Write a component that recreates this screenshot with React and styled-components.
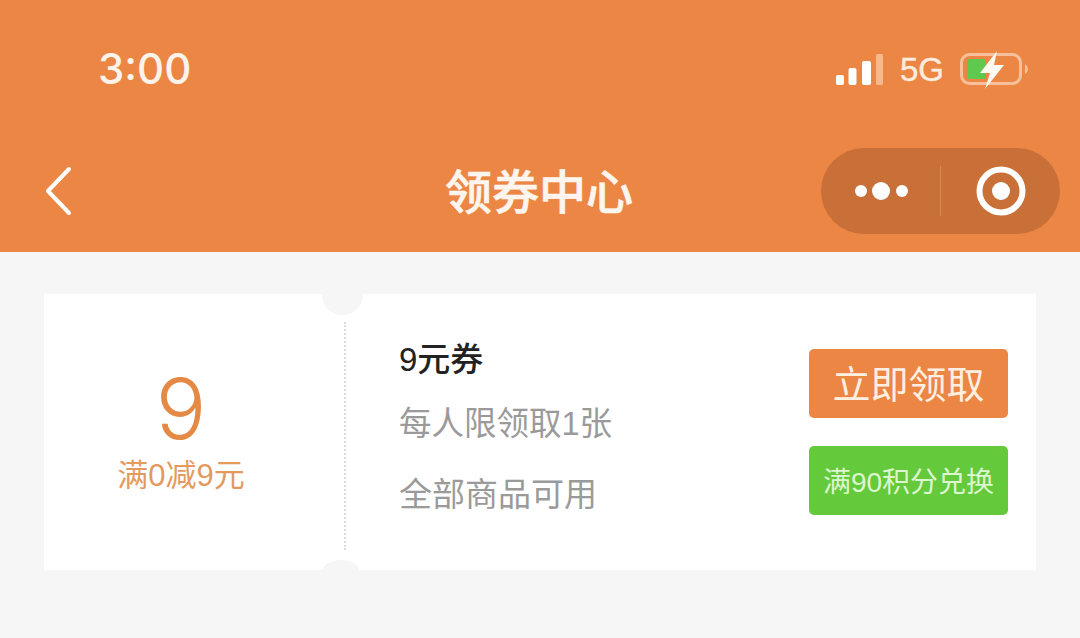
import React from 'react'
import styled, { createGlobalStyle } from 'styled-components'

const GlobalStyle = createGlobalStyle`
  html, body {
    margin: 0;
    padding: 0;
    background: #f6f6f6;
    font-family: "Liberation Sans", "Noto Sans CJK SC", sans-serif;
  }
`

const Page = styled.div`
  width: 1080px;
  height: 638px;
  overflow: hidden;
  background: #f6f6f6;
`

const Header = styled.header`
  height: 252px;
  background: #ec8644;
  color: #fff;
`

const StatusBar = styled.div`
  height: 130px;
  box-sizing: border-box;
  padding: 45px 50px 0 98px;
  display: flex;
  justify-content: space-between;
  align-items: flex-start;
`

const Time = styled.div`
  font-family: Inter, sans-serif;
  font-size: 42px;
  font-weight: 500;
  line-height: 48px;
  color: #fdf3ea;
`

const StatusIcons = styled.div`
  display: flex;
  align-items: center;
  gap: 16px;
  margin-top: 4px;
`

const NetworkLabel = styled.span`
  font-size: 33px;
  line-height: 36px;
  color: #fcecdf;
  -webkit-text-stroke: 0.4px #fcecdf;
`

const NavBar = styled.nav`
  height: 122px;
  display: grid;
  grid-template-columns: 1fr auto 1fr;
  align-items: center;
`

const BackButton = styled.div`
  padding-left: 44px;
  display: flex;
  align-items: center;
`

const Title = styled.h1`
  margin: 3px 0 0 -2px;
  font-size: 47px;
  font-weight: 500;
  line-height: 60px;
  color: #fdf5ee;
  -webkit-text-stroke: 0.7px #fdf5ee;
`

const Capsule = styled.div`
  justify-self: end;
  margin-right: 20px;
  width: 239px;
  height: 86px;
  border-radius: 43px;
  background: #c87038;
  display: grid;
  grid-template-columns: 1fr 1px 1fr;
  align-items: center;
  justify-items: center;
`

const CapsuleDivider = styled.div`
  width: 1px;
  height: 50px;
  background: #da8a50;
`

const Ticket = styled.section`
  position: relative;
  margin: 42px 44px 0;
  height: 276px;
  background: #fff;
  display: flex;
  align-items: flex-start;
`

const TopNotch = styled.div`
  position: absolute;
  left: 278px;
  top: 0;
  width: 41px;
  height: 21px;
  border-radius: 0 0 20px 20px;
  background: #f6f6f6;
`

const BottomNotch = styled.div`
  position: absolute;
  left: 279px;
  bottom: 0;
  width: 36px;
  height: 10px;
  border-radius: 18px 18px 0 0 / 10px 10px 0 0;
  background: #f6f6f6;
`

const Amount = styled.div`
  width: 274px;
  display: flex;
  flex-direction: column;
  align-items: center;
  padding-top: 72px;
  margin-right: 26px;
  color: #e48a45;
`

const AmountValue = styled.div`
  font-family: Inter, sans-serif;
  font-size: 84px;
  font-weight: 350;
  line-height: 86px;
`

const AmountRule = styled.div`
  font-size: 31px;
  line-height: 36px;
  color: #e39a5f;
  margin-top: 6px;
  white-space: nowrap;
`

const Perforation = styled.div`
  width: 0;
  height: 228px;
  margin-top: 28px;
  border-left: 2px dotted #dcdcdc;
`

const Info = styled.div`
  flex: 1;
  padding: 51px 0 0 53px;
  display: flex;
  flex-direction: column;
`

const InfoTitle = styled.div`
  font-size: 33px;
  font-weight: 500;
  line-height: 30px;
  color: #222;
`

const InfoLine = styled.div`
  font-size: ${props => props.$size}px;
  line-height: 44px;
  color: #9a9a9a;
  margin-top: 27px;
`

const Actions = styled.div`
  width: 199px;
  margin: 55px 28px 0 0;
  display: flex;
  flex-direction: column;
  gap: 28px;
`

const ActionButton = styled.div`
  box-sizing: border-box;
  height: 69px;
  padding-bottom: ${props => props.$lift}px;
  border-radius: 5px;
  background: ${props => props.$color};
  color: ${props => props.$text};
  font-size: ${props => props.$size}px;
  display: flex;
  align-items: center;
  justify-content: center;
  white-space: nowrap;
`

const SignalIcon = () => (
  <svg width="48" height="32" viewBox="0 0 48 32">
    <rect x="0" y="21" width="8" height="10" rx="2" fill="#fff" />
    <rect x="12.5" y="14" width="8" height="17" rx="2" fill="#fff" />
    <rect x="26" y="7" width="9" height="24" rx="2" fill="#fff" />
    <rect x="40" y="0" width="7" height="31" rx="1.5" fill="#f6b98d" />
  </svg>
)

const BatteryIcon = () => (
  <svg width="70" height="42" viewBox="0 0 70 42">
    <rect x="1.5" y="5.5" width="59" height="29" rx="8" fill="none" stroke="#f8c09a" strokeWidth="3" />
    <rect x="7" y="10" width="19" height="20" rx="3" fill="#5fc94f" />
    <path d="M65 15 Q68 17 68 20 Q68 23 65 25 Z" fill="#f8c09a" />
    <path d="M37 2 L20 24 L30 24 L25 40 L44 16 L34 16 Z" fill="#fffaf2" />
  </svg>
)

const BackIcon = () => (
  <svg width="30" height="50" viewBox="0 0 30 50">
    <path d="M25 3 L4 25 L25 47" fill="none" stroke="#fff" strokeWidth="4" strokeLinecap="round" strokeLinejoin="round" />
  </svg>
)

const MoreIcon = () => (
  <svg width="58" height="20" viewBox="0 0 58 20">
    <circle cx="9" cy="10" r="6" fill="#fff" />
    <circle cx="29" cy="10" r="9" fill="#fff" />
    <circle cx="50" cy="10" r="6" fill="#fff" />
  </svg>
)

const TargetIcon = () => (
  <svg width="50" height="50" viewBox="0 0 50 50">
    <circle cx="25" cy="25" r="21.5" fill="none" stroke="#fff" strokeWidth="6" />
    <circle cx="25" cy="25" r="9" fill="#fff" />
  </svg>
)

const App = () => {
  return (
    <Page>
      <GlobalStyle />
      <Header>
        <StatusBar>
          <Time>3:00</Time>
          <StatusIcons>
            <SignalIcon />
            <NetworkLabel>5G</NetworkLabel>
            <BatteryIcon />
          </StatusIcons>
        </StatusBar>
        <NavBar>
          <BackButton><BackIcon /></BackButton>
          <Title>领券中心</Title>
          <Capsule>
            <MoreIcon />
            <CapsuleDivider />
            <TargetIcon />
          </Capsule>
        </NavBar>
      </Header>
      <Ticket>
        <TopNotch />
        <BottomNotch />
        <Amount>
          <AmountValue>9</AmountValue>
          <AmountRule>满0减9元</AmountRule>
        </Amount>
        <Perforation />
        <Info>
          <InfoTitle>9元券</InfoTitle>
          <InfoLine $size={32.5}>每人限领取1张</InfoLine>
          <InfoLine $size={33}>全部商品可用</InfoLine>
        </Info>
        <Actions>
          <ActionButton $color="#ec8644" $text="#fdf0e2" $size={38} $lift={5}>立即领取</ActionButton>
          <ActionButton $color="#65c93c" $text="#dcf7cf" $size={28} $lift={2}>满90积分兑换</ActionButton>
        </Actions>
      </Ticket>
    </Page>
  )
}

export default App
